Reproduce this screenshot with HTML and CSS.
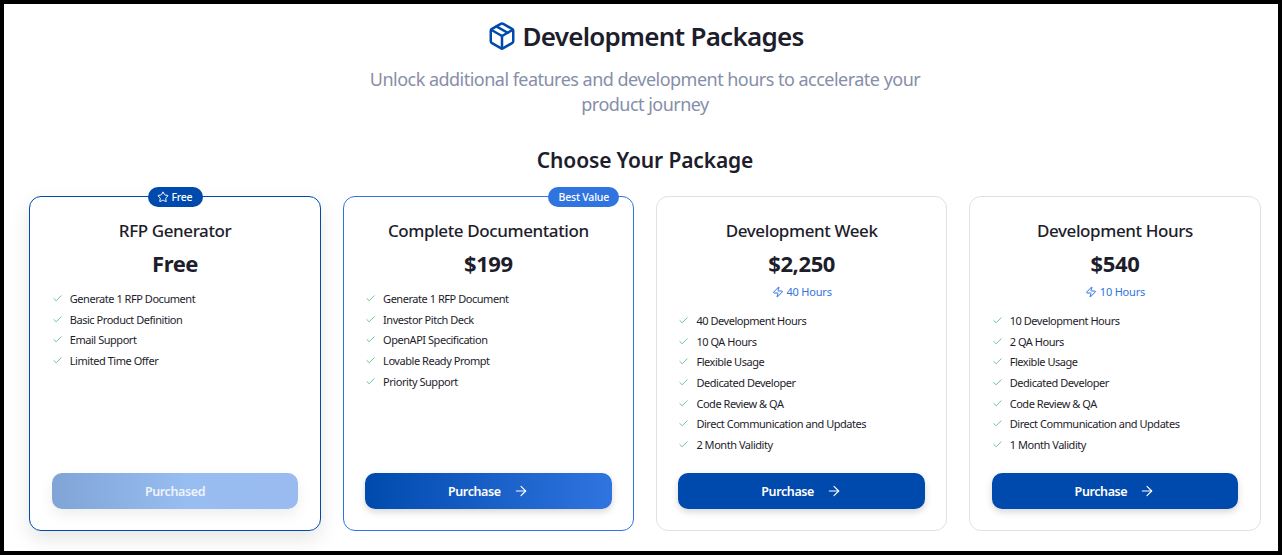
FILE: index.html
```html
<!DOCTYPE html>
<html lang="en">
<head>
    <meta charset="UTF-8">
    <title>Development Packages</title>
    <link rel="stylesheet" href="styles.css">
</head>
<body>
    <svg class="sprite" width="0" height="0">
        <symbol id="check" viewBox="0 0 24 24"><path d="M20 6 9 17l-5-5"/></symbol>
        <symbol id="arrow" viewBox="0 0 24 24"><path d="M5 12h14"/><path d="m12 5 7 7-7 7"/></symbol>
        <symbol id="zap" viewBox="0 0 24 24"><path d="M4 14a1 1 0 0 1-.78-1.63l9.9-10.2a.5.5 0 0 1 .86.46l-1.92 6.02A1 1 0 0 0 13 10h7a1 1 0 0 1 .78 1.63l-9.9 10.2a.5.5 0 0 1-.86-.46l1.92-6.02A1 1 0 0 0 11 14z"/></symbol>
    </svg>
    <div class="page">
        <header class="page-head">
            <h1 class="page-title">
                <svg class="box-icon" viewBox="0 0 24 24"><path d="M21 8a2 2 0 0 0-1-1.73l-7-4a2 2 0 0 0-2 0l-7 4A2 2 0 0 0 3 8v8a2 2 0 0 0 1 1.73l7 4a2 2 0 0 0 2 0l7-4A2 2 0 0 0 21 16Z"/><path d="m3.3 7 8.7 5 8.7-5"/><path d="M12 22V12"/><path d="m7.5 4.27 9 5.15"/></svg>
                Development Packages
            </h1>
            <p class="page-sub">Unlock additional features and development hours to accelerate your product journey</p>
        </header>
        <h2 class="section-title">Choose Your Package</h2>
        <div class="plans">
            <div class="plan plan-free">
                <span class="badge badge-free">
                    <svg class="badge-icon" viewBox="0 0 24 24"><path d="M11.5 2.3a.5.5 0 0 1 1 0l2.3 4.7a2 2 0 0 0 1.6 1.1l5.2.8a.5.5 0 0 1 .3.9l-3.8 3.7a2 2 0 0 0-.6 1.9l.9 5.2a.5.5 0 0 1-.8.6l-4.6-2.5a2 2 0 0 0-2 0l-4.6 2.5a.5.5 0 0 1-.8-.6l.9-5.2a2 2 0 0 0-.6-1.9L2.1 9.8a.5.5 0 0 1 .3-.9l5.2-.8a2 2 0 0 0 1.6-1.1z"/></svg>
                    Free
                </span>
                <h3 class="plan-name">RFP Generator</h3>
                <div class="plan-price">Free</div>
                <ul class="features">
                    <li><svg class="check"><use href="#check"/></svg>Generate 1 RFP Document</li>
                    <li><svg class="check"><use href="#check"/></svg>Basic Product Definition</li>
                    <li><svg class="check"><use href="#check"/></svg>Email Support</li>
                    <li><svg class="check"><use href="#check"/></svg>Limited Time Offer</li>
                </ul>
                <button class="buy buy-done">Purchased</button>
            </div>
            <div class="plan plan-best">
                <span class="badge badge-best">Best Value</span>
                <h3 class="plan-name">Complete Documentation</h3>
                <div class="plan-price">$199</div>
                <ul class="features">
                    <li><svg class="check"><use href="#check"/></svg>Generate 1 RFP Document</li>
                    <li><svg class="check"><use href="#check"/></svg>Investor Pitch Deck</li>
                    <li><svg class="check"><use href="#check"/></svg>OpenAPI Specification</li>
                    <li><svg class="check"><use href="#check"/></svg>Lovable Ready Prompt</li>
                    <li><svg class="check"><use href="#check"/></svg>Priority Support</li>
                </ul>
                <button class="buy buy-gradient">Purchase<svg class="arrow"><use href="#arrow"/></svg></button>
            </div>
            <div class="plan">
                <h3 class="plan-name">Development Week</h3>
                <div class="plan-price">$2,250</div>
                <div class="plan-hours"><svg class="zap"><use href="#zap"/></svg>40 Hours</div>
                <ul class="features">
                    <li><svg class="check"><use href="#check"/></svg>40 Development Hours</li>
                    <li><svg class="check"><use href="#check"/></svg>10 QA Hours</li>
                    <li><svg class="check"><use href="#check"/></svg>Flexible Usage</li>
                    <li><svg class="check"><use href="#check"/></svg>Dedicated Developer</li>
                    <li><svg class="check"><use href="#check"/></svg>Code Review &amp; QA</li>
                    <li><svg class="check"><use href="#check"/></svg>Direct Communication and Updates</li>
                    <li><svg class="check"><use href="#check"/></svg>2 Month Validity</li>
                </ul>
                <button class="buy">Purchase<svg class="arrow"><use href="#arrow"/></svg></button>
            </div>
            <div class="plan">
                <h3 class="plan-name">Development Hours</h3>
                <div class="plan-price">$540</div>
                <div class="plan-hours"><svg class="zap"><use href="#zap"/></svg>10 Hours</div>
                <ul class="features">
                    <li><svg class="check"><use href="#check"/></svg>10 Development Hours</li>
                    <li><svg class="check"><use href="#check"/></svg>2 QA Hours</li>
                    <li><svg class="check"><use href="#check"/></svg>Flexible Usage</li>
                    <li><svg class="check"><use href="#check"/></svg>Dedicated Developer</li>
                    <li><svg class="check"><use href="#check"/></svg>Code Review &amp; QA</li>
                    <li><svg class="check"><use href="#check"/></svg>Direct Communication and Updates</li>
                    <li><svg class="check"><use href="#check"/></svg>1 Month Validity</li>
                </ul>
                <button class="buy">Purchase<svg class="arrow"><use href="#arrow"/></svg></button>
            </div>
        </div>
    </div>
</body>
</html>
```

FILE: styles.css
```css
* {
    box-sizing: border-box;
}
body {
    margin: 0;
    background: #fff;
    font-family: "Noto Sans", "Open Sans", sans-serif;
    color: #1d1d2b;
    overflow: hidden;
}
.sprite {
    position: absolute;
}
.page {
    height: 555px;
    border: solid #000;
    border-width: 4px;
    padding: 13px 17.4px 0 25.4px;
    overflow: hidden;
}
.page-head {
    text-align: center;
}
.page-title {
    margin: 0;
    font-size: 26px;
    line-height: 38px;
    font-weight: 600;
    letter-spacing: -0.75px;
    display: flex;
    justify-content: center;
    align-items: center;
    gap: 6px;
}
.box-icon {
    width: 30px;
    height: 30px;
    fill: none;
    stroke: #004aad;
    stroke-width: 2;
    stroke-linecap: round;
    stroke-linejoin: round;
}
.page-sub {
    margin: 12px auto 0;
    width: 576px;
    font-size: 18px;
    line-height: 25px;
    letter-spacing: -0.52px;
    color: #868ea8;
}
.section-title {
    margin: 28px 0 0;
    text-align: center;
    font-size: 21px;
    line-height: 30px;
    font-weight: 600;
    letter-spacing: -0.15px;
}
.plans {
    display: grid;
    grid-template-columns: repeat(4, 1fr);
    gap: 22px;
    margin-top: 21px;
}
.plan {
    position: relative;
    height: 335px;
    padding: 21px 21.4px;
    background: #fff;
    border: 1px solid #e0e0ea;
    border-radius: 12px;
    display: flex;
    flex-direction: column;
}
.plan-free {
    border-color: #004aad;
    box-shadow: 0 8px 20px rgba(0, 0, 0, 0.1);
}
.plan-best {
    border-color: #3074e0;
}
.badge {
    position: absolute;
    top: -10px;
    height: 20px;
    border-radius: 10px;
    color: #fff;
    font-size: 10.5px;
    font-weight: 500;
    letter-spacing: -0.2px;
    display: flex;
    align-items: center;
    gap: 2px;
}
.badge-free {
    left: 118px;
    padding: 0 11px 0 9px;
    background: #004aad;
}
.badge-best {
    right: 14px;
    padding: 0 10px 0 10.5px;
    background: #3074e0;
}
.badge-icon {
    width: 12px;
    height: 12px;
    fill: none;
    stroke: #fff;
    stroke-width: 2;
    stroke-linejoin: round;
}
.plan-name {
    margin: 0;
    text-align: center;
    font-size: 17px;
    line-height: 26px;
    font-weight: 500;
    letter-spacing: -0.4px;
}
.plan-price {
    margin-top: 4px;
    text-align: center;
    font-size: 22px;
    line-height: 30px;
    font-weight: 700;
    letter-spacing: -0.4px;
}
.plan-hours {
    margin-top: 6px;
    display: flex;
    justify-content: center;
    align-items: center;
    gap: 3px;
    font-size: 11px;
    line-height: 16px;
    letter-spacing: -0.2px;
    color: #3074e0;
}
.zap {
    width: 12px;
    height: 12px;
    fill: none;
    stroke: #3074e0;
    stroke-width: 2;
    stroke-linejoin: round;
}
.features {
    list-style: none;
    margin: 10px 0 0;
    padding: 0;
    flex: 1;
}
.features li {
    display: flex;
    align-items: center;
    gap: 7px;
    height: 20.7px;
    font-size: 11px;
    letter-spacing: -0.46px;
}
.check {
    width: 11px;
    height: 11px;
    flex: none;
    fill: none;
    stroke: #5fbf8a;
    stroke-width: 2;
    stroke-linecap: round;
    stroke-linejoin: round;
}
.buy {
    height: 36px;
    border: none;
    border-radius: 10px;
    background: #004aad;
    color: #fff;
    font-family: inherit;
    font-size: 12.5px;
    font-weight: 600;
    letter-spacing: -0.4px;
    display: flex;
    justify-content: center;
    align-items: center;
    gap: 12px;
    box-shadow: 0 3px 7px rgba(0, 0, 0, 0.16);
}
.buy-gradient {
    background: linear-gradient(90deg, #004aad, #3074e0);
}
.buy-done {
    background: linear-gradient(90deg, #80a4d6, #98bdf0 55%, #9abbf0);
    color: #eef3fd;
    box-shadow: 0 6px 14px rgba(0, 0, 0, 0.07);
}
.arrow {
    width: 16px;
    height: 16px;
    fill: none;
    stroke: #fff;
    stroke-width: 1.7;
    stroke-linecap: round;
    stroke-linejoin: round;
}
```
